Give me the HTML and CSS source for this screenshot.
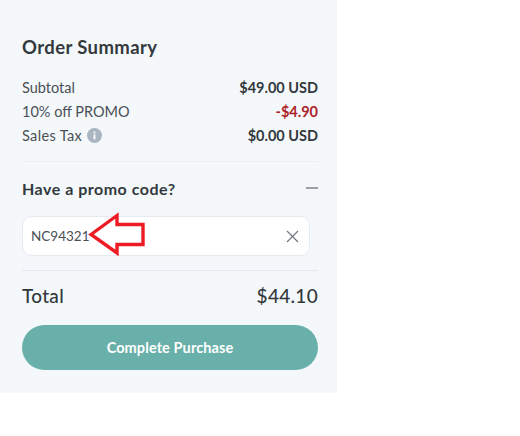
FILE: index.html
```html
<!DOCTYPE html>
<html>
<head>
<meta charset="utf-8">
<title>Order Summary</title>
<link rel="stylesheet" href="styles.css">
</head>
<body>
    <div class="summary">
        <h2 class="title">Order Summary</h2>
        <div class="lines">
            <div class="line"><span>Subtotal</span><b>$49.00 USD</b></div>
            <div class="line"><span>10% off PROMO</span><b class="discount">-$4.90</b></div>
            <div class="line">
                <span class="tax">Sales Tax
                    <svg class="info" width="15" height="15" viewBox="0 0 15 15">
                        <circle cx="7.5" cy="7.5" r="7.5" fill="#a9b5c0"/>
                        <rect x="6.6" y="6.400" width="1.8" height="5" fill="#fff"/>
                        <rect x="6.6" y="3.600" width="1.8" height="1.8" fill="#fff"/>
                    </svg>
                </span>
                <b>$0.00 USD</b>
            </div>
        </div>
        <div class="promo">
            <div class="promo_head">
                <span>Have a promo code?</span>
                <span class="minus"></span>
            </div>
            <div class="promo_input">
                <span>NC94321</span>
                <svg width="13" height="13" viewBox="0 0 13 13">
                    <path d="M1 1L12 12M12 1L1 12" stroke="#6f7780" stroke-width="1.2" fill="none"/>
                </svg>
                <svg class="arrow" width="60" height="46" viewBox="0 0 60 46">
                    <path d="M3 22.500L29 3.500V12.500H55V32.500H29V41Z" fill="none" stroke="#ed1c24" stroke-width="3.400"/>
                </svg>
            </div>
        </div>
        <div class="total"><span>Total</span><span>$44.10</span></div>
        <button class="purchase">Complete Purchase</button>
    </div>
</body>
</html>
```

FILE: styles.css
```css
body {
    margin: 0;
    background: #fff;
    color: #33383d;
    font-family: Lato, "Open Sans", sans-serif;
}

.summary {
    width: 337px;
    height: 393px;
    box-sizing: border-box;
    padding: 36px 19px 0 22px;
    background: #f4f8fb;
}

.title {
    margin: 0 0 17px 0;
    font-size: 18.500px;
    line-height: 22px;
    font-weight: 700;
    letter-spacing: 0.4px;
}

.lines {
    padding-bottom: 14px;
    border-bottom: 1px solid #e9eef3;
}

.line {
    display: flex;
    justify-content: space-between;
    align-items: center;
    height: 24px;
    font-size: 14.500px;
    color: #4a5056;
}

.line b {
    font-weight: 700;
    color: #33383d;
}

.line .discount {
    color: #ad2328;
}

.tax {
    display: flex;
    align-items: center;
    gap: 5px;
    letter-spacing: 0.35px;
}

.promo_head {
    display: flex;
    justify-content: space-between;
    align-items: center;
    height: 52px;
    padding-bottom: 2px;
    font-size: 16px;
    font-weight: 700;
    letter-spacing: 0.5px;
}

.minus {
    width: 12px;
    height: 2px;
    background: #9a9fa5;
}

.promo_input {
    position: relative;
    display: flex;
    justify-content: space-between;
    align-items: center;
    width: 288px;
    height: 40px;
    box-sizing: border-box;
    padding: 0 10px 0 8px;
    background: #fff;
    border: 1px solid #e6ebf1;
    border-radius: 9px;
    font-size: 13.500px;
    color: #4a5056;
}

.arrow {
    position: absolute;
    left: 65px;
    top: -5px;
}

.total {
    display: flex;
    justify-content: space-between;
    align-items: center;
    height: 49px;
    padding-bottom: 5px;
    margin-top: 14px;
    border-top: 1px solid #e3e9ef;
    font-size: 19px;
    font-weight: 500;
    letter-spacing: 0.3px;
}

.purchase {
    display: block;
    width: 100%;
    height: 45px;
    border: none;
    border-radius: 23px;
    background: #68b0a9;
    color: #fff;
    font-family: Lato, sans-serif;
    font-size: 14.500px;
    font-weight: 700;
    letter-spacing: 0.1px;
}
```
